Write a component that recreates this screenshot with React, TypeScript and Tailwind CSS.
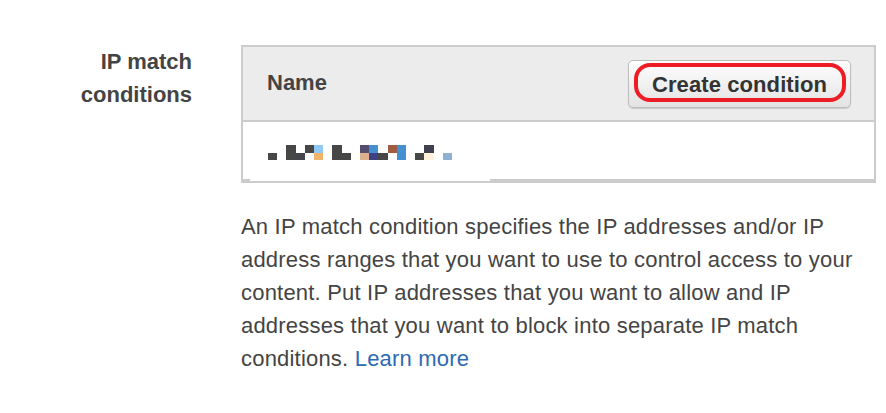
import React from "react";

const cells: { c: number; top?: string; bot?: string }[] = [
  { c: 0, bot: "#474747" },
  { c: 2, top: "#474747", bot: "#474747" },
  { c: 3, bot: "#45454d" },
  { c: 4, top: "#474747" },
  { c: 5, top: "#90caf9", bot: "#f0b46c" },
  { c: 7, top: "#474747", bot: "#474747" },
  { c: 8, bot: "#474747" },
  { c: 10, top: "#554d70", bot: "#dcb08a" },
  { c: 11, top: "#4590d0", bot: "#3f3f85" },
  { c: 12, bot: "#474747" },
  { c: 13, top: "#a05c40" },
  { c: 14, top: "#4590d0", bot: "#4590d0" },
  { c: 16, bot: "#474747" },
  { c: 17, top: "#3f3f50", bot: "#fff0dc" },
  { c: 19, bot: "#8fb0d0" },
];

function Mosaic() {
  const w = 9.2;
  return (
    <svg width="190" height="15" viewBox="0 0 190 15" shapeRendering="crispEdges">
      {cells.map((k) => (
        <g key={k.c}>
          {k.top && <rect x={k.c * w} y={0} width={w} height={8} fill={k.top} />}
          {k.bot && <rect x={k.c * w} y={8} width={w} height={7} fill={k.bot} />}
        </g>
      ))}
    </svg>
  );
}

export default function App() {
  return (
    <div
      className="w-[886px] h-[413px] bg-white overflow-hidden"
      style={{ fontFamily: '"Liberation Sans", Arial, sans-serif' }}
    >
      <div className="flex pt-[45px]">
        <div className="w-[192px] shrink-0 text-right text-[22px] leading-[33px] font-bold text-[#444]">
          IP match
          <br />
          conditions
        </div>
        <div className="ml-[49px] w-[635px] shrink-0">
          <div className="relative border-2 border-[#cccccc] shadow-[0_2px_0_#cccccc]">
            <div className="h-[73px] bg-[#ececec] flex items-center justify-between pl-6 pr-[23px]">
              <span className="text-[22px] font-bold text-[#444] leading-none pb-[2px]">Name</span>
              <button className="relative w-[223px] h-[48px] rounded-[5px] border border-[#bdbdbd] bg-gradient-to-b from-[#fefefe] to-[#e3e3e3] shadow-[0_1px_1px_rgba(0,0,0,0.15)] flex items-center justify-center">
                <span className="absolute left-[5px] right-[4px] top-[2px] bottom-[5px] border-4 border-[#ee1c24] rounded-[16px]" />
                <span className="relative text-[22px] font-bold text-[#333] leading-none pt-[3px] tracking-[0.1px]">
                  Create condition
                </span>
              </button>
            </div>
            <div className="h-[59px] bg-white border-t-2 border-[#cccccc] flex items-center pl-[25px] pt-[4px]">
              <Mosaic />
            </div>
            <div className="absolute left-[7px] w-[240px] bottom-[-2px] h-[2px] bg-white" />
          </div>
          <p className="mt-[29px] text-[22px] leading-[33px] tracking-[0.2px] text-[#444]">
            An IP match condition specifies the IP addresses and/or IP address ranges that you want to use
            to control access to your content. Put IP addresses that you want to allow and IP addresses
            that you want to block into separate IP match conditions.{" "}
            <a className="text-[#2d6ab4]">Learn more</a>
          </p>
        </div>
      </div>
    </div>
  );
}
